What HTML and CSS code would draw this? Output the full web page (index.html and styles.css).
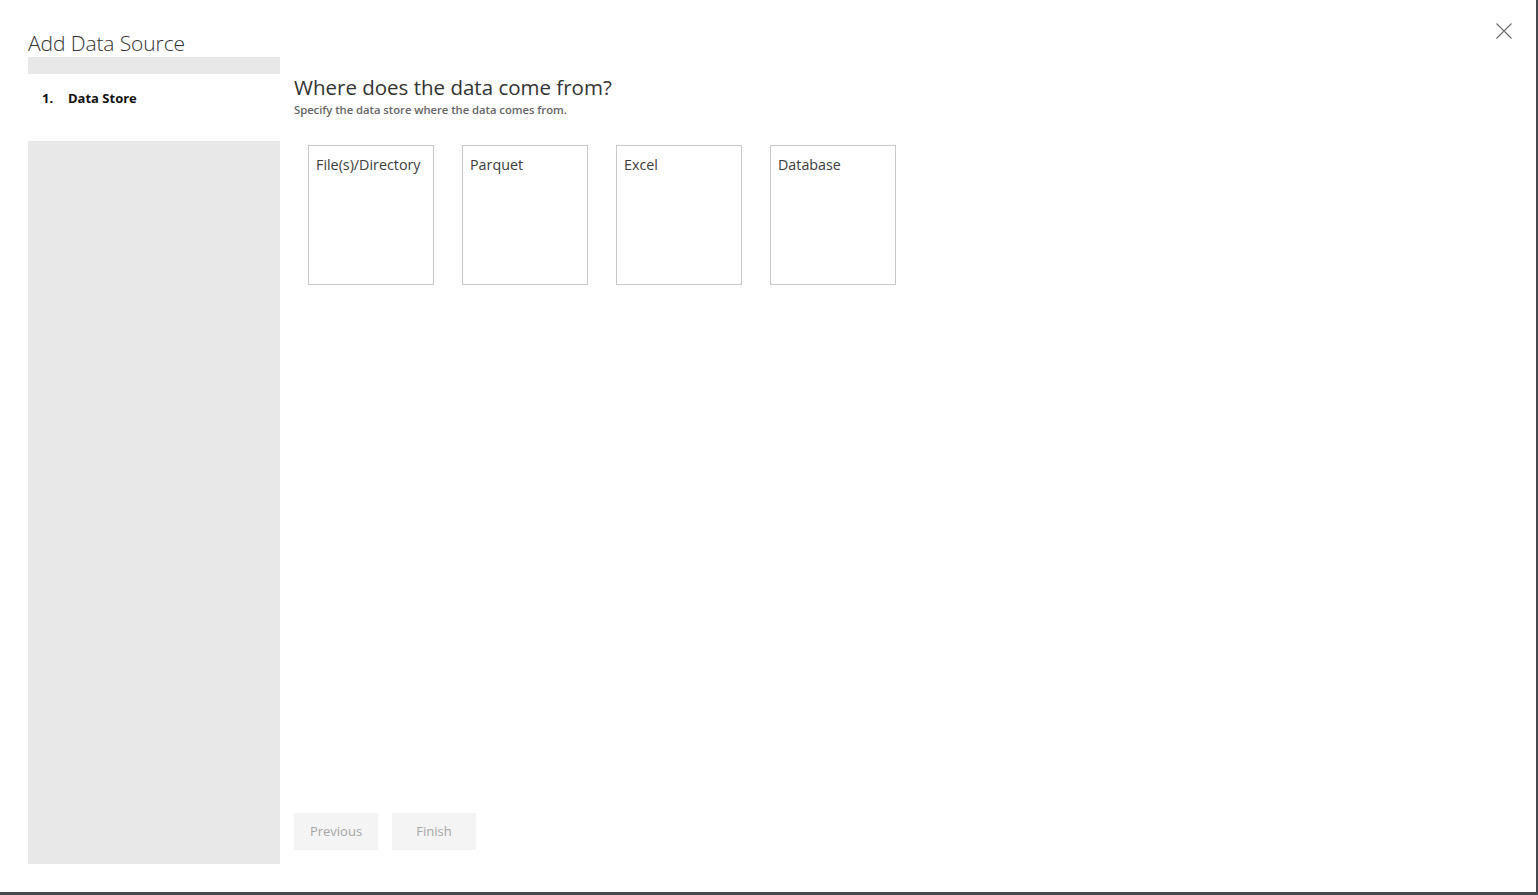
FILE: index.html
```html
<!DOCTYPE html>
<html lang="en">
<head>
<meta charset="utf-8">
<title>Add Data Source</title>
<link rel="stylesheet" href="styles.css">
</head>
<body>
<div class="dialog">
  <button class="close" aria-label="Close">
    <svg width="16" height="16" viewBox="0 0 16 16"><path d="M0.5 0.5 L15.5 15.5 M15.5 0.5 L0.5 15.5" stroke="#6a6a6a" stroke-width="1.1" fill="none"/></svg>
  </button>
  <h1 class="title">Add Data Source</h1>
  <div class="content">
    <nav class="sidebar">
      <div class="side-top"></div>
      <div class="step"><span class="step-num">1.</span><span class="step-name">Data Store</span></div>
      <div class="side-rest"></div>
    </nav>
    <main class="main">
      <h2 class="heading">Where does the data come from?</h2>
      <p class="sub">Specify the data store where the data comes from.</p>
      <div class="cards">
        <div class="card">File(s)/Directory</div>
        <div class="card">Parquet</div>
        <div class="card">Excel</div>
        <div class="card">Database</div>
      </div>
      <div class="buttons">
        <button class="btn">Previous</button>
        <button class="btn">Finish</button>
      </div>
    </main>
  </div>
</div>
</body>
</html>
```
FILE: styles.css
```css
html, body { margin: 0; padding: 0; background: #fff; }
body { font-family: "Open Sans", "Noto Sans", sans-serif; color: #333; }
.dialog {
  position: relative;
  width: 1508px;
  height: 892px;
  border-right: 2px solid #464a4f;
  border-bottom: 3px solid #464a4f;
  display: flex;
  flex-direction: column;
  padding-left: 28px;
  box-sizing: content-box;
}
.close {
  position: absolute;
  top: 23px;
  right: 24px;
  width: 16px;
  height: 16px;
  padding: 0;
  border: 0;
  background: none;
  line-height: 0;
}
.title {
  margin: 0;
  height: 57px;
  box-sizing: border-box;
  padding-top: 30px;
  font-size: 21px;
  font-weight: 300;
  line-height: 26px;
  color: #333;
  letter-spacing: -0.1px;
}
.content { display: flex; height: 807px; }
.sidebar { width: 252px; display: flex; flex-direction: column; }
.side-top { height: 17px; background: #e8e8e8; }
.step {
  height: 67px;
  display: flex;
  align-items: flex-start;
  padding: 16px 0 0 14px;
  font-size: 13px;
  line-height: 17px;
  font-weight: 700;
  color: #111;
  box-sizing: border-box;
}
.step-num { width: 26px; }
.side-rest { flex: 1; background: #e8e8e8; }
.main { margin-left: 14px; flex: 1; display: flex; flex-direction: column; }
.heading {
  margin: 17px 0 0 0;
  font-size: 20.5px;
  font-weight: 400;
  line-height: 26px;
  color: #333;
  letter-spacing: 0;
}
.sub {
  margin: 2px 0 0 0;
  font-size: 11.3px;
  font-weight: 600;
  color: #666;
  line-height: 15px;
  letter-spacing: -0.05px;
}
.cards { display: flex; gap: 28px; margin: 28px 0 0 14px; }
.card {
  width: 126px;
  height: 140px;
  box-sizing: border-box;
  border: 1px solid #c8c8c8;
  padding: 9px 0 0 7px;
  font-size: 14.3px;
  line-height: 20px;
  color: #3c3c3c;
  letter-spacing: 0;
}
.buttons { margin-top: auto; margin-bottom: 14px; display: flex; gap: 14px; }
.btn {
  width: 84px;
  height: 37px;
  border: 0;
  background: #f4f4f4;
  color: #a6a6a6;
  font-family: "Open Sans", "Noto Sans", sans-serif;
  font-size: 13px;
  padding: 0 0 1px 0;
}
```
